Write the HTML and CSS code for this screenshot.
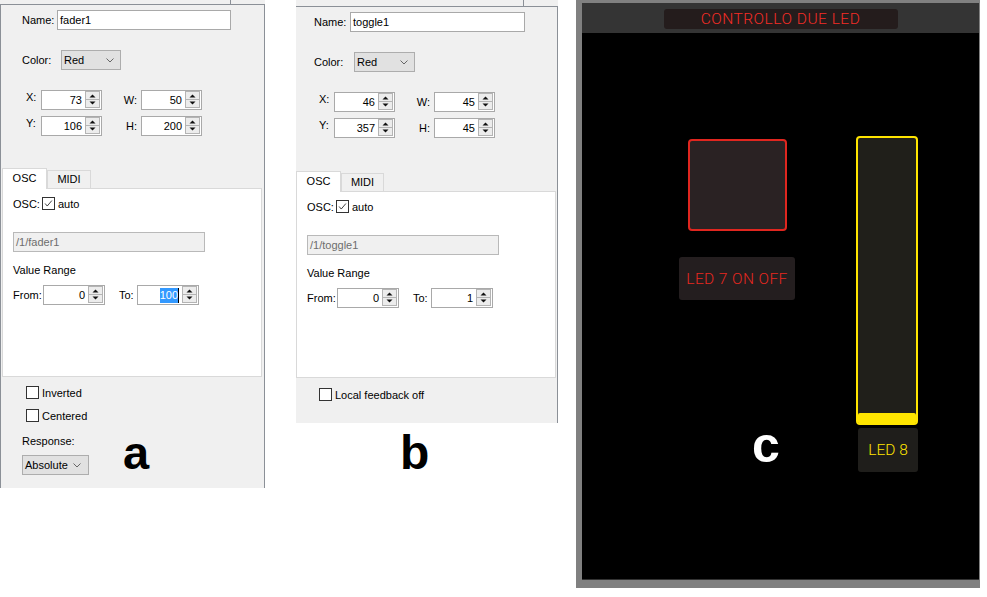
FILE: index.html
```
<!DOCTYPE html>
<html>
<head>
<meta charset="utf-8">
<link rel="stylesheet" href="styles.css">
</head>
<body>
<svg class="defs" width="0" height="0">
  <symbol id="spn" viewBox="0 0 15 17">
    <rect x="0.5" y="0.5" width="14" height="16" fill="#ececec" stroke="#b4b4b4"/>
    <line x1="0.5" y1="8.5" x2="14.5" y2="8.5" stroke="#b4b4b4"/>
    <path d="M4.5 6.5 L7.5 3.5 L10.5 6.5 Z" fill="#111"/>
    <path d="M4.5 10.5 L7.5 13.5 L10.5 10.5 Z" fill="#111"/>
  </symbol>
  <symbol id="chv" viewBox="0 0 8 5">
    <polyline points="0.5,0.5 4,4 7.5,0.5" fill="none" stroke="#666" stroke-width="1"/>
  </symbol>
  <symbol id="tick" viewBox="0 0 13 13">
    <polyline points="2.5,6.5 5,9.5 10.5,3" fill="none" stroke="#333" stroke-width="1.1"/>
  </symbol>
</svg>

<div class="pa">
  <div class="strip strip-a"><i class="tick"></i></div>
  <div class="frame frame-a">
    <div class="form form-a">
      <div class="row r-name"><span class="lbl w-name">Name:</span><div class="tbox tbox-a">fader1</div></div>
      <div class="row r-color"><span class="lbl w-color">Color:</span><div class="combo combo-red"><span>Red</span><svg class="chev"><use href="#chv"/></svg></div></div>
      <div class="geo geo-a">
        <div class="geo-row">
          <span class="glbl">X:</span>
          <div class="spin"><span class="val">73</span><svg class="spn"><use href="#spn"/></svg></div>
          <span class="glbl2">W:</span>
          <div class="spin"><span class="val">50</span><svg class="spn"><use href="#spn"/></svg></div>
        </div>
        <div class="geo-row">
          <span class="glbl">Y:</span>
          <div class="spin"><span class="val">106</span><svg class="spn"><use href="#spn"/></svg></div>
          <span class="glbl2">H:</span>
          <div class="spin"><span class="val">200</span><svg class="spn"><use href="#spn"/></svg></div>
        </div>
      </div>
    </div>
    <div class="tabs tabs-a">
      <div class="tabbar"><div class="tab tab-on">OSC</div><div class="tab tab-midi">MIDI</div></div>
      <div class="page page-a">
        <div class="osc"><span>OSC:</span><span class="cb cb-on"><svg><use href="#tick"/></svg></span><span>auto</span></div>
        <div class="addr">/1/fader1</div>
        <div class="vr">Value Range</div>
        <div class="range">
          <span class="rl-from">From:</span>
          <div class="spin spin-r"><span class="val">0</span><svg class="spn"><use href="#spn"/></svg></div>
          <span class="rl-to">To:</span>
          <div class="spin spin-r"><span class="val"><span class="sel">100</span><span class="caret"></span></span><svg class="spn"><use href="#spn"/></svg></div>
        </div>
      </div>
    </div>
    <div class="checks checks-a">
      <div class="chk"><span class="cb"></span><span>Inverted</span></div>
      <div class="chk"><span class="cb"></span><span>Centered</span></div>
    </div>
    <div class="resp-row">
      <div class="resp">
        <div class="resp-lbl">Response:</div>
        <div class="combo combo-abs"><span>Absolute</span><svg class="chev"><use href="#chv"/></svg></div>
      </div>
      <span class="mark mark-a">a</span>
    </div>
  </div>
</div>

<div class="pb">
  <div class="strip strip-b"><i class="tick tick-b"></i></div>
  <div class="frame frame-b">
    <div class="form form-b">
      <div class="row r-name"><span class="lbl w-name-b">Name:</span><div class="tbox tbox-b">toggle1</div></div>
      <div class="row r-color"><span class="lbl w-color-b">Color:</span><div class="combo combo-red-b"><span>Red</span><svg class="chev"><use href="#chv"/></svg></div></div>
      <div class="geo geo-b">
        <div class="geo-row">
          <span class="glbl">X:</span>
          <div class="spin"><span class="val">46</span><svg class="spn"><use href="#spn"/></svg></div>
          <span class="glbl2">W:</span>
          <div class="spin"><span class="val">45</span><svg class="spn"><use href="#spn"/></svg></div>
        </div>
        <div class="geo-row">
          <span class="glbl">Y:</span>
          <div class="spin"><span class="val">357</span><svg class="spn"><use href="#spn"/></svg></div>
          <span class="glbl2">H:</span>
          <div class="spin"><span class="val">45</span><svg class="spn"><use href="#spn"/></svg></div>
        </div>
      </div>
    </div>
    <div class="tabs tabs-b">
      <div class="tabbar"><div class="tab tab-on">OSC</div><div class="tab tab-midi-b">MIDI</div></div>
      <div class="page page-b">
        <div class="osc"><span>OSC:</span><span class="cb cb-on"><svg><use href="#tick"/></svg></span><span>auto</span></div>
        <div class="addr">/1/toggle1</div>
        <div class="vr">Value Range</div>
        <div class="range">
          <span class="rl-from">From:</span>
          <div class="spin spin-r"><span class="val">0</span><svg class="spn"><use href="#spn"/></svg></div>
          <span class="rl-to">To:</span>
          <div class="spin spin-r"><span class="val">1</span><svg class="spn"><use href="#spn"/></svg></div>
        </div>
      </div>
    </div>
    <div class="checks checks-b">
      <div class="chk"><span class="cb"></span><span>Local feedback off</span></div>
    </div>
  </div>
  <span class="mark mark-b">b</span>
</div>

<div class="pc">
  <div class="screen">
    <div class="header"><div class="pill">CONTROLLO DUE LED</div></div>
    <div class="canvas">
      <div class="toggle"></div>
      <div class="lab lab7">LED 7 ON OFF</div>
      <div class="fader"><div class="fill"></div></div>
      <div class="lab lab8">LED 8</div>
      <span class="mark mark-c">c</span>
    </div>
  </div>
</div>
</body>
</html>
```
FILE: styles.css
```
html, body {
  margin: 0;
  padding: 0;
}
body {
  width: 987px;
  height: 597px;
  overflow: hidden;
  background: #fff;
  display: flex;
  align-items: flex-start;
  font-family: "Liberation Sans", Arial, sans-serif;
  font-size: 11px;
  color: #000;
}
.defs {
  position: absolute;
  width: 0;
  height: 0;
}

/* ---------- shared dialog parts ---------- */
.strip {
  display: flex;
  box-sizing: border-box;
  background: #f0f0f0;
}
.tick {
  display: block;
  width: 1px;
  background: #8b9097;
}
.frame {
  box-sizing: border-box;
  background: #f0f0f0;
  border: 1px solid #8b9097;
  border-bottom: 0;
}
.row {
  display: flex;
  align-items: center;
  height: 20px;
}
.lbl { flex: none; }
.r-name { margin-top: 5px; }
.r-color { margin-top: 20px; }
.tbox {
  box-sizing: border-box;
  height: 20px;
  border: 1px solid #a9a9a9;
  background: #fff;
  padding-left: 2px;
  line-height: 18px;
}
.combo {
  display: flex;
  align-items: center;
  justify-content: space-between;
  box-sizing: border-box;
  height: 20px;
  border: 1px solid #adadad;
  background: #e1e1e1;
  padding: 0 6px 0 2px;
}
.chev {
  width: 8px;
  height: 5px;
  display: block;
}
.geo {
  margin-top: 20px;
  display: flex;
  flex-direction: column;
  gap: 6px;
}
.geo-row {
  display: flex;
  height: 20px;
}
.glbl {
  width: 15px;
  line-height: 15px;
}
.glbl2 {
  width: 39px;
  box-sizing: border-box;
  padding-right: 4px;
  text-align: right;
  line-height: 20px;
}
.spin {
  width: 61px;
  height: 20px;
  box-sizing: border-box;
  border: 1px solid #a9a9a9;
  background: #fff;
  display: flex;
  align-items: flex-start;
  padding-right: 1px;
}
.spin-r { width: 62px; }
.val {
  flex: 1;
  text-align: right;
  padding-right: 3px;
  line-height: 18px;
  display: flex;
  justify-content: flex-end;
  align-items: center;
  height: 18px;
}
.sel {
  background: #3399ff;
  color: #fff;
  line-height: 15px;
}
.caret {
  width: 1px;
  height: 15px;
  background: #000;
}
.spn {
  flex: none;
  width: 15px;
  height: 17px;
  display: block;
}

.tabs { width: 260px; }
.tabbar {
  display: flex;
  align-items: flex-end;
  height: 20px;
}
.tab {
  box-sizing: border-box;
  height: 18px;
  border: 1px solid #d9d9d9;
  border-bottom: 0;
  background: #f0f0f0;
  text-align: center;
  line-height: 17px;
}
.tab-on {
  width: 45px;
  height: 21px;
  margin-bottom: -1px;
  background: #fff;
  position: relative;
  z-index: 1;
  line-height: 19px;
}
.tab-midi { width: 44px; }
.tab-midi-b { width: 43px; }
.page {
  box-sizing: border-box;
  border: 1px solid #d9d9d9;
  background: #fff;
  padding: 8px 0 0 10px;
}
.osc {
  display: flex;
  align-items: center;
  height: 13px;
}
.cb {
  flex: none;
  display: block;
  width: 13px;
  height: 13px;
  box-sizing: border-box;
  border: 1px solid #333;
  background: #fff;
  margin-right: 3px;
}
.osc .cb { margin-left: 2px; }
.cb svg {
  display: block;
  width: 11px;
  height: 11px;
}
.addr {
  margin-top: 22px;
  width: 192px;
  height: 20px;
  box-sizing: border-box;
  border: 1px solid #b9b9b9;
  background: #f0f0f0;
  color: #6d6d6d;
  padding-left: 2px;
  line-height: 18px;
}
.vr {
  margin-top: 12px;
  line-height: 13px;
}
.range {
  margin-top: 8px;
  display: flex;
  align-items: center;
  height: 20px;
}
.rl-from { width: 30px; }
.rl-to {
  width: 18px;
  margin-left: 14px;
}
.checks {
  display: flex;
  flex-direction: column;
  gap: 10px;
}
.chk {
  display: flex;
  align-items: center;
  height: 13px;
}
.mark {
  font-family: "Liberation Sans", Arial, sans-serif;
  font-weight: bold;
}

/* ---------- panel a ---------- */
.pa {
  flex: none;
  width: 265px;
}
.strip-a {
  height: 4px;
  padding-left: 230px;
}
.strip-a .tick { height: 4px; }
.frame-a { height: 484px; }
.form-a { padding-left: 21px; }
.w-name { width: 35px; }
.tbox-a { width: 174px; }
.w-color { width: 39px; }
.combo-red { width: 60px; }
.geo-a { padding-left: 4px; }
.tabs-a { margin: 32px 0 0 1px; }
.page-a { height: 189px; }
.checks-a {
  margin-top: 9px;
  padding-left: 25px;
}
.resp-row {
  display: flex;
  padding-left: 21px;
  margin-top: 13px;
}
.resp-lbl { line-height: 13px; }
.combo-abs {
  margin-top: 7px;
  width: 67px;
  padding-right: 7px;
}
.mark-a {
  font-size: 47px;
  line-height: 47px;
  align-self: flex-end;
  margin: -20px 0 -1px 34px;
}

/* ---------- panel b ---------- */
.pb {
  flex: none;
  width: 262px;
  margin-left: 31px;
  display: flex;
  flex-direction: column;
}
.strip-b {
  height: 6px;
  padding-left: 227px;
}
.strip-b .tick { height: 6px; }
.frame-b {
  height: 417px;
  border-left: 0;
}
.form-b { padding-left: 18px; }
.w-name-b { width: 36px; }
.tbox-b { width: 175px; }
.w-color-b { width: 40px; }
.combo-red-b { width: 61px; }
.geo-b { padding-left: 5px; }
.tabs-b { margin-top: 33px; }
.page-b { height: 187px; }
.checks-b {
  margin-top: 10px;
  padding-left: 23px;
}
.mark-b {
  font-size: 48px;
  line-height: 48px;
  margin: 6px 0 0 104px;
}

/* ---------- panel c ---------- */
.pc {
  flex: none;
  width: 404px;
  height: 588px;
  margin-left: 18px;
  box-sizing: border-box;
  padding: 3px 1px 8px 6px;
  background: #808080;
}
.screen {
  height: 577px;
  box-sizing: border-box;
  background: #000;
  border-bottom: 1px solid #333;
  display: flex;
  flex-direction: column;
}
.header {
  flex: none;
  height: 30px;
  background: #343434;
  display: flex;
  justify-content: center;
  align-items: flex-start;
}
.pill {
  margin-top: 6px;
  width: 234px;
  height: 20px;
  border-radius: 3px;
  background: #241c1c;
  color: #f42c26;
  font-family: Roboto, "Liberation Sans", sans-serif;
  font-weight: 300;
  font-size: 15.5px;
  letter-spacing: 0.5px;
  line-height: 21px;
  text-align: center;
}
.canvas {
  flex: 1;
  position: relative;
}
.toggle {
  position: absolute;
  left: 106px;
  top: 106px;
  width: 99px;
  height: 92px;
  box-sizing: border-box;
  border: 2px solid #e0261f;
  border-radius: 4px;
  background: #2a2223;
}
.lab {
  position: absolute;
  box-sizing: border-box;
  border-radius: 3px;
  display: flex;
  align-items: center;
  justify-content: center;
  font-family: Roboto, "Liberation Sans", sans-serif;
  font-weight: 300;
  font-size: 15.5px;
}
.lab7 {
  left: 97px;
  top: 224px;
  width: 116px;
  height: 43px;
  background: #241e1f;
  color: #e8281f;
  letter-spacing: 0.4px;
}
.lab8 {
  left: 276px;
  top: 395px;
  width: 60px;
  height: 44px;
  background: #1f1e1b;
  color: #ffe500;
}
.fader {
  position: absolute;
  left: 274px;
  top: 103px;
  width: 62px;
  height: 289px;
  box-sizing: border-box;
  border: 2px solid #ffe500;
  border-radius: 4px;
  background: #201f1a;
  display: flex;
  flex-direction: column;
  justify-content: flex-end;
}
.fill {
  height: 10px;
  background: #ffe500;
  border-radius: 2px 2px 1px 1px;
}
.mark-c {
  position: absolute;
  left: 170px;
  top: 387px;
  font-size: 50px;
  line-height: 50px;
  color: #fff;
}
```
